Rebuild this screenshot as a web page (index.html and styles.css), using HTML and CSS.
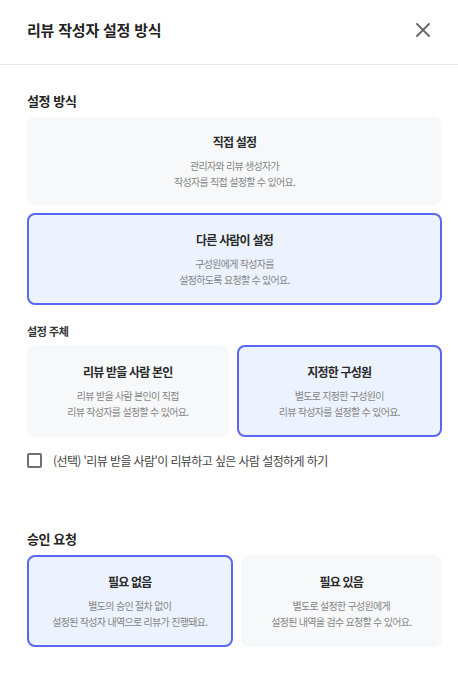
FILE: index.html
```html
<!DOCTYPE html>
<html lang="ko">
<head>
    <meta charset="UTF-8">
    <meta name="viewport" content="width=device-width, initial-scale=1.0">
    <title>리뷰 작성자 설정 방식</title>
    <link rel="stylesheet" href="styles.css">
</head>
<body>
    <div class="modal">
        <div class="modal-header">
            <h1 class="modal-title">리뷰 작성자 설정 방식</h1>
            <button type="button" class="close-btn" aria-label="닫기">
                <svg width="14" height="14" viewBox="0 0 14 14">
                    <path d="M1 1L13 13M13 1L1 13" stroke="#666" stroke-width="1.8" stroke-linecap="round"/>
                </svg>
            </button>
        </div>

        <div class="modal-body">
            <h2 class="section-title">설정 방식</h2>
            <div class="option-list">
                <div class="option">
                    <div class="option-title">직접 설정</div>
                    <div class="option-desc">관리자와 리뷰 생성자가<br>작성자를 직접 설정할 수 있어요.</div>
                </div>
                <div class="option selected">
                    <div class="option-title">다른 사람이 설정</div>
                    <div class="option-desc">구성원에게 작성자를<br>설정하도록 요청할 수 있어요.</div>
                </div>
            </div>

            <h3 class="sub-title">설정 주체</h3>
            <div class="option-row">
                <div class="option">
                    <div class="option-title">리뷰 받을 사람 본인</div>
                    <div class="option-desc">리뷰 받을 사람 본인이 직접<br>리뷰 작성자를 설정할 수 있어요.</div>
                </div>
                <div class="option selected">
                    <div class="option-title">지정한 구성원</div>
                    <div class="option-desc">별도로 지정한 구성원이<br>리뷰 작성자를 설정할 수 있어요.</div>
                </div>
            </div>

            <label class="check-row">
                <span class="checkbox"></span>
                <span class="check-label">(선택) '리뷰 받을 사람'이 리뷰하고 싶은 사람 설정하게 하기</span>
            </label>

            <h2 class="section-title approval">승인 요청</h2>
            <div class="option-row">
                <div class="option selected">
                    <div class="option-title">필요 없음</div>
                    <div class="option-desc">별도의 승인 절차 없이<br>설정된 작성자 내역으로 리뷰가 진행돼요.</div>
                </div>
                <div class="option">
                    <div class="option-title">필요 있음</div>
                    <div class="option-desc">별도로 설정한 구성원에게<br>설정된 내역을 검수 요청할 수 있어요.</div>
                </div>
            </div>
        </div>
    </div>
</body>
</html>
```

FILE: styles.css
```css
body {
    margin: 0;
    background-color: #fff;
    font-family: "Noto Sans CJK KR", "Noto Sans", sans-serif;
    color: #222;
}

.modal {
    width: 458px;
}

.modal-header {
    display: flex;
    align-items: center;
    justify-content: space-between;
    height: 65px;
    padding: 0 28px 0 27px;
    box-sizing: border-box;
    border-bottom: 1px solid #e6e6e6;
}

.modal-title {
    margin: 0 0 5px;
    font-size: 15px;
    line-height: 20px;
    font-weight: 700;
    letter-spacing: -0.2px;
}

.close-btn {
    display: flex;
    padding: 0;
    margin: 0 0 5px;
    background: none;
    border: none;
    cursor: pointer;
}

.modal-body {
    padding: 26px 16px 0 27px;
}

.section-title {
    margin: 0 0 6px;
    font-size: 13px;
    line-height: 20px;
    font-weight: 700;
    letter-spacing: -0.4px;
}

.section-title.approval {
    margin-top: 59px;
}

.sub-title {
    margin: 17px 0 5px;
    font-size: 11px;
    line-height: 18px;
    font-weight: 700;
    letter-spacing: -0.4px;
    color: #333;
}

.option-list {
    display: flex;
    flex-direction: column;
    gap: 8px;
}

.option-row {
    display: flex;
    gap: 8px;
}

.option-row .option {
    flex: 1;
}

.option {
    display: flex;
    flex-direction: column;
    justify-content: center;
    padding: 15px 10px;
    background-color: #f7f8fa;
    border-radius: 8px;
    text-align: center;
    cursor: pointer;
}

.option.selected {
    background-color: #ecf2fe;
    border: 2px solid #5a68f1;
}

.option-title {
    font-size: 12px;
    line-height: 20px;
    font-weight: 700;
    letter-spacing: -0.8px;
    color: #2a2a2a;
}

.option-desc {
    margin-top: 6px;
    font-size: 10px;
    line-height: 16px;
    letter-spacing: -0.7px;
    color: #858585;
}

.check-row {
    display: flex;
    align-items: center;
    gap: 11px;
    margin-top: 13px;
    height: 20px;
}

.checkbox {
    width: 11px;
    height: 11px;
    border: 2px solid #707070;
    border-radius: 2px;
}

.check-label {
    font-size: 12px;
    letter-spacing: -0.6px;
    color: #444;
}
```
